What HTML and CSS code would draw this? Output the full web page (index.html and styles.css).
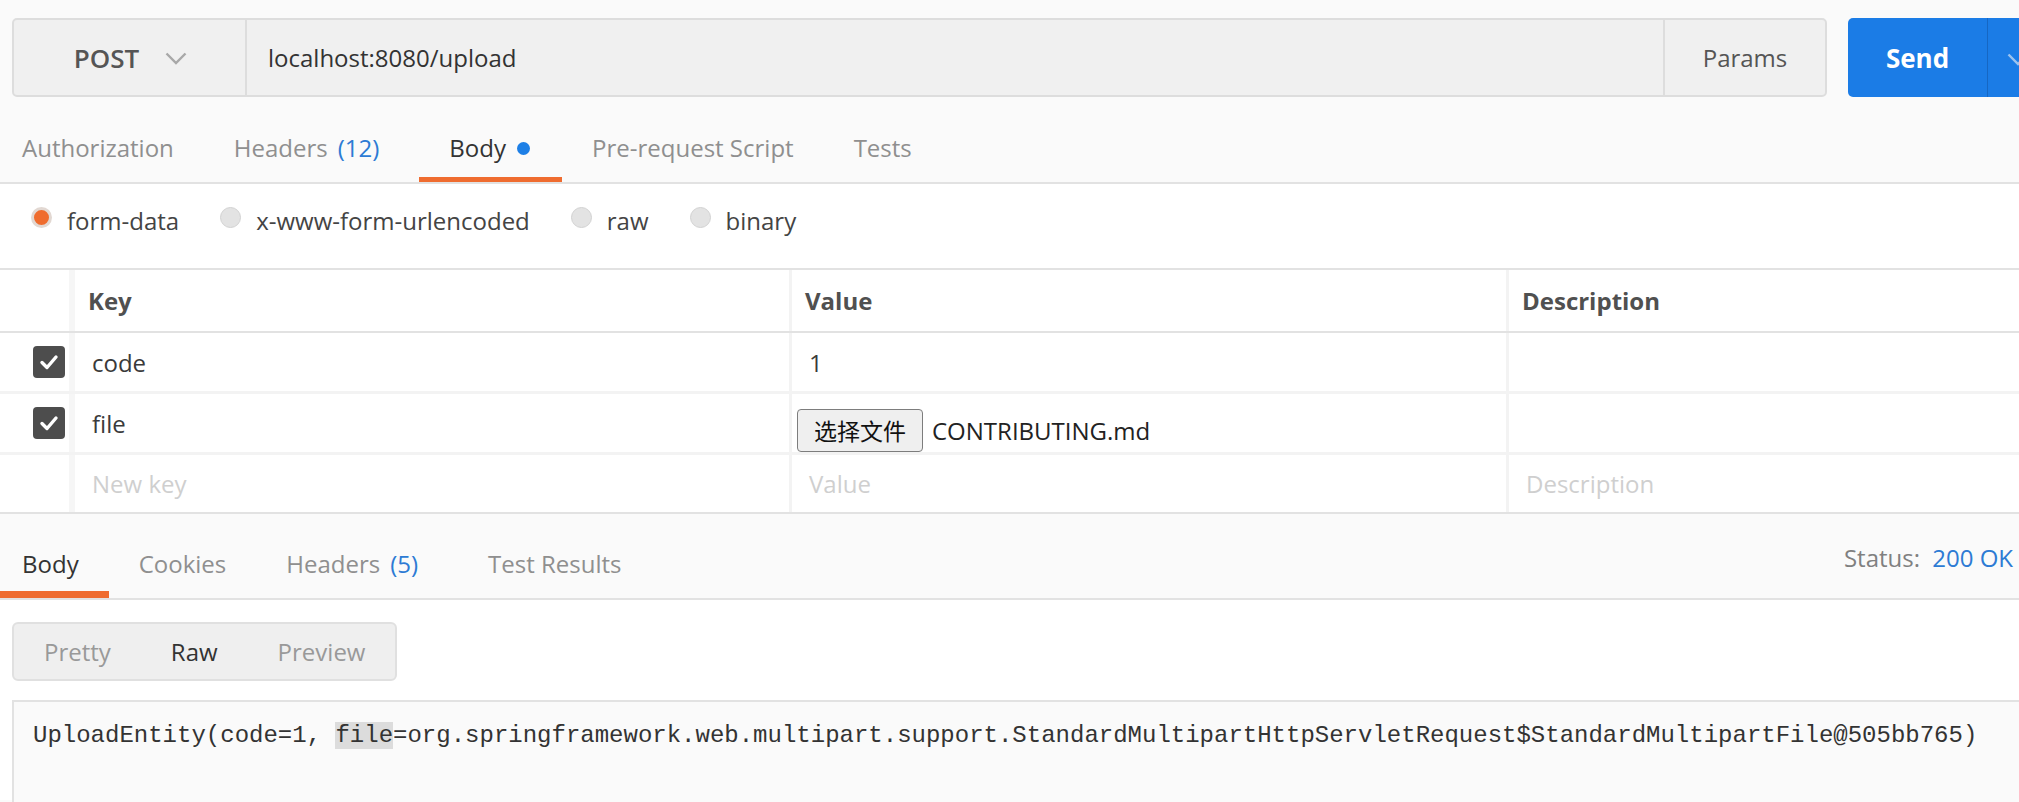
FILE: index.html
```html
<!DOCTYPE html>
<html lang="en">
<head>
<meta charset="utf-8">
<title>Postman - POST localhost:8080/upload</title>
<link rel="stylesheet" href="styles.css">
</head>
<body>
<div class="app">
  <div class="request-bar">
    <div class="url-group">
      <div class="method">
        <span class="method-name">POST</span>
        <svg class="chev" width="22" height="13" viewBox="0 0 22 13"><polyline points="1.5,1.5 11,11 20.5,1.5" fill="none" stroke="#a8a8a8" stroke-width="2.4"/></svg>
      </div>
      <div class="url">localhost:8080/upload</div>
      <div class="params">Params</div>
    </div>
    <div class="send">
      <span class="send-label">Send</span>
      <span class="send-menu"><svg width="22" height="13" viewBox="0 0 22 13"><polyline points="1.5,1.5 11,11 20.5,1.5" fill="none" stroke="#9cc3ef" stroke-width="2.4"/></svg></span>
    </div>
  </div>

  <nav class="tabs req-tabs">
    <div class="tab">Authorization</div>
    <div class="tab">Headers <span class="count">(12)</span></div>
    <div class="tab active">Body<span class="dot"></span></div>
    <div class="tab">Pre-request Script</div>
    <div class="tab">Tests</div>
  </nav>

  <div class="body-types">
    <label class="radio-item"><span class="radio checked"></span>form-data</label>
    <label class="radio-item"><span class="radio"></span>x-www-form-urlencoded</label>
    <label class="radio-item"><span class="radio"></span>raw</label>
    <label class="radio-item"><span class="radio"></span>binary</label>
  </div>

  <div class="kv-table">
    <div class="row head">
      <div class="cell chk"></div>
      <div class="cell">Key</div>
      <div class="cell">Value</div>
      <div class="cell">Description</div>
    </div>
    <div class="row">
      <div class="cell chk"><span class="checkbox"><svg width="32" height="32" viewBox="0 0 32 32"><polyline points="9,16.5 14,21.5 23,11" fill="none" stroke="#fff" stroke-width="3.4" stroke-linecap="round" stroke-linejoin="round"/></svg></span></div>
      <div class="cell">code</div>
      <div class="cell">1</div>
      <div class="cell"></div>
    </div>
    <div class="row">
      <div class="cell chk"><span class="checkbox"><svg width="32" height="32" viewBox="0 0 32 32"><polyline points="9,16.5 14,21.5 23,11" fill="none" stroke="#fff" stroke-width="3.4" stroke-linecap="round" stroke-linejoin="round"/></svg></span></div>
      <div class="cell">file</div>
      <div class="cell file-cell"><span class="file-btn">选择文件</span><span class="file-name">CONTRIBUTING.md</span></div>
      <div class="cell"></div>
    </div>
    <div class="row last">
      <div class="cell chk"></div>
      <div class="cell placeholder">New key</div>
      <div class="cell placeholder">Value</div>
      <div class="cell placeholder">Description</div>
    </div>
  </div>

  <nav class="tabs res-tabs">
    <div class="tab active">Body</div>
    <div class="tab">Cookies</div>
    <div class="tab">Headers <span class="count">(5)</span></div>
    <div class="tab">Test Results</div>
    <div class="status">Status: <span class="status-code">200 OK</span></div>
  </nav>

  <div class="res-body">
    <div class="seg">
      <span class="seg-item">Pretty</span>
      <span class="seg-item on">Raw</span>
      <span class="seg-item">Preview</span>
    </div>
    <div class="code">UploadEntity(code=1, <span class="hl">file</span>=org.springframework.web.multipart.support.StandardMultipartHttpServletRequest$StandardMultipartFile@505bb765)</div>
  </div>
</div>
</body>
</html>
```

FILE: styles.css
```css
* { box-sizing: border-box; }
html, body {
  margin: 0;
  padding: 0;
  width: 2019px;
  height: 802px;
  overflow: hidden;
  background: #fafafa;
}
body {
  font-family: "Open Sans", "Noto Sans", sans-serif;
  font-size: 24px;
  color: #333;
}
.app { width: 2019px; }

/* request bar */
.request-bar {
  display: flex;
  padding: 18px 0 0 12px;
  height: 97px;
}
.url-group {
  width: 1815px;
  height: 79px;
  flex-shrink: 0;
  display: flex;
  background: #f0f0f0;
  border: 2px solid #dddddd;
  border-radius: 5px;
}
.method {
  width: 233px;
  display: flex;
  align-items: center;
  justify-content: center;
  gap: 26px;
  border-right: 2px solid #dddddd;
  padding-left: 2px;
}
.method-name {
  font-size: 26px;
  font-weight: 600;
  color: #555;
}
.chev { margin-top: 2px; }
.url {
  flex: 1;
  display: flex;
  align-items: center;
  padding-left: 21px;
  color: #333;
}
.params {
  width: 162px;
  display: flex;
  align-items: center;
  justify-content: center;
  border-left: 2px solid #dddddd;
  color: #555;
}
.send {
  flex-shrink: 0;
  margin-left: 21px;
  width: 210px;
  height: 79px;
  display: flex;
  background: #1b7ce6;
  border-radius: 5px;
}
.send-label {
  width: 140px;
  display: flex;
  align-items: center;
  justify-content: center;
  color: #fff;
  font-size: 26px;
  font-weight: 700;
  border-right: 1px solid #1667c3;
}
.send-menu {
  width: 60px;
  display: flex;
  align-items: center;
  justify-content: center;
  padding-top: 4px;
}

/* tabs */
.tabs {
  display: flex;
  border-bottom: 2px solid #e2e2e2;
}
.tab {
  display: flex;
  align-items: center;
  padding: 0 30px;
  color: #8f8f8f;
  border-bottom: 5px solid transparent;
  white-space: nowrap;
}
.tab:first-child { padding-left: 0; }
.tab.active {
  color: #333;
  border-bottom-color: #ef6c30;
}
.count {
  color: #2d7bd4;
  margin-left: 10px;
  margin-right: 10px;
}
.dot {
  width: 13px;
  height: 13px;
  border-radius: 50%;
  background: #1d7fe6;
  margin-left: 11px;
  margin-top: 3px;
}
.req-tabs {
  height: 87px;
  padding-left: 22px;
}
.req-tabs .tab {
  height: 85px;
  padding-top: 20px;
}
.req-tabs .tab.active { padding-left: 30px; padding-right: 32px; }

/* body type radios */
.body-types {
  background: #fff;
  height: 84px;
  display: flex;
  align-items: center;
  padding: 0 0 12px 31px;
  gap: 41px;
}
.radio-item {
  display: flex;
  align-items: center;
  color: #444;
}
.radio {
  width: 21px;
  height: 21px;
  border-radius: 50%;
  background: #e3e3e3;
  border: 1px solid #d2d2d2;
  margin-right: 15px;
  margin-top: -5px;
}
.radio.checked {
  background: #ef6c2e;
  border: 3px solid #e2d8d2;
}

/* key/value table */
.kv-table {
  background: #fff;
  border-top: 2px solid #e2e2e2;
  border-bottom: 2px solid #e2e2e2;
}
.row {
  display: grid;
  grid-template-columns: 75px 717px 717px 1fr;
  height: 61px;
  border-bottom: 3px solid #f3f3f3;
}
.row.head {
  height: 63px;
  border-bottom: 2px solid #e2e2e2;
}
.row.last {
  height: 57px;
  border-bottom: none;
}
.cell {
  display: flex;
  align-items: center;
  padding-left: 17px;
  border-right: 3px solid #f3f3f3;
  color: #3a3a3a;
}
.cell:last-child { border-right: none; }
.cell.chk {
  padding-left: 33px;
  border-right: 6px solid #f6f6f6;
}
.head .cell {
  padding-left: 13px;
  font-weight: 700;
  color: #505050;
}
.head .cell.chk { padding-left: 0; }
.checkbox {
  width: 32px;
  height: 32px;
  border-radius: 4px;
  background: #4d4d4d;
  display: flex;
}
.file-cell {
  padding-left: 5px;
  padding-top: 14px;
}
.file-btn {
  display: flex;
  align-items: center;
  justify-content: center;
  width: 126px;
  height: 43px;
  border: 1px solid #7d7d7d;
  border-radius: 4px;
  background: #efefef;
  color: #111;
  font-family: "Noto Sans CJK SC", "Noto Sans", sans-serif;
  font-size: 23px;
}
.file-name {
  margin-left: 9px;
  color: #222;
}
.placeholder { color: #cfcfcf; }

/* response */
.res-tabs {
  height: 86px;
  background: #fafafa;
}
.res-tabs .tab {
  height: 84px;
  border-bottom-width: 7px;
  padding: 22px 30px 0;
}
.res-tabs .tab:first-child { padding-left: 22px; padding-right: 30px; }
.status {
  margin-left: auto;
  padding-right: 6px;
  padding-top: 2px;
  align-self: center;
  color: #808080;
}
.status-code {
  color: #2d7bd4;
  margin-left: 6px;
}
.res-body {
  background: #fff;
  padding: 22px 0 0 12px;
  height: 200px;
}
.seg {
  display: inline-flex;
  align-items: center;
  height: 59px;
  padding: 0;
  background: #efefef;
  border: 2px solid #e0e0e0;
  border-radius: 6px;
}
.seg-item {
  padding: 0 30px;
  color: #999;
}
.seg-item.on { color: #333; }
.code {
  margin-top: 19px;
  height: 120px;
  background: #fafafa;
  border-top: 2px solid #e2e2e2;
  border-left: 2px solid #e2e2e2;
  padding: 20px 0 0 19px;
  font-family: "Liberation Mono", "DejaVu Sans Mono", monospace;
  font-size: 24px;
  line-height: 28px;
  color: #333;
  white-space: pre;
}
.hl { background: #dcdcdc; }
```
